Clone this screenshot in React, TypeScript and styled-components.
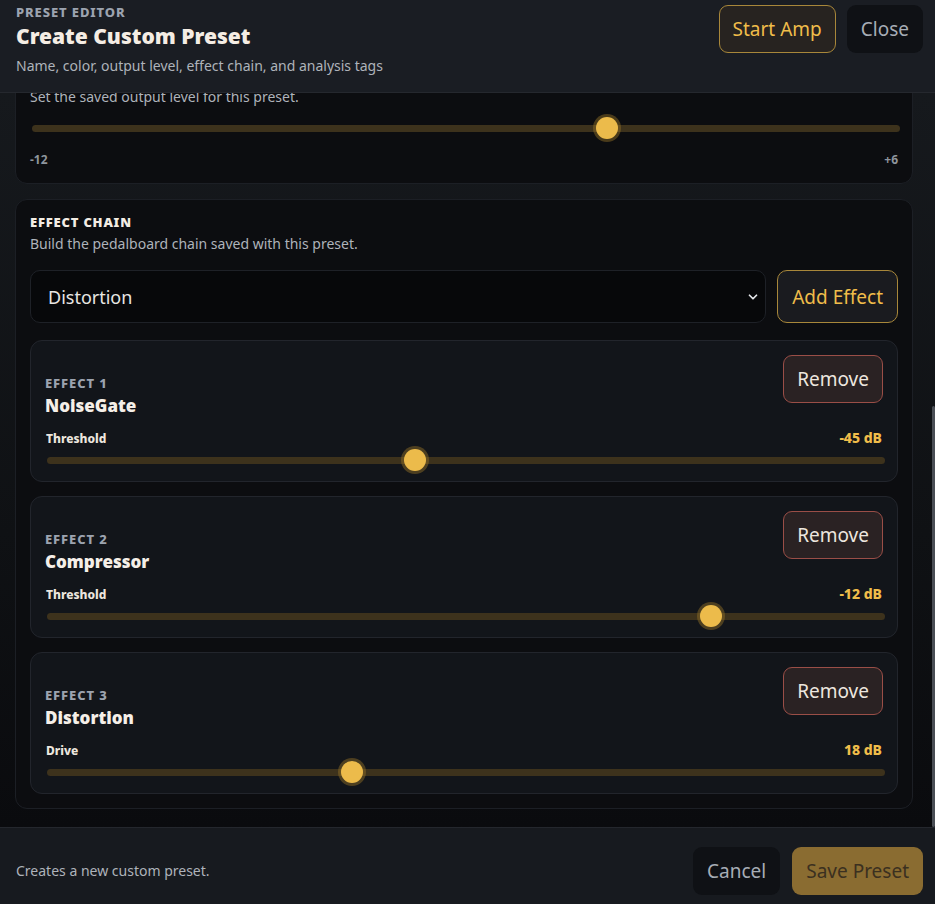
import { useLayoutEffect, useRef, useState } from 'react';
import styled, { createGlobalStyle } from 'styled-components';

type Effect = {
	id: number,
	name: string,
	param: string,
	unit: string,
	min: number,
	max: number,
	value: number,
}

const GlobalStyle = createGlobalStyle`
	html, body {
		margin: 0;
		height: 100%;
		background: #0b0c0f;
	}
	body {
		font-family: "Noto Sans", "Open Sans", sans-serif;
		color: #e5e7eb;
	}
	#root {
		height: 100%;
	}
	* {
		box-sizing: border-box;
	}
`

const Shell = styled.div`
	height: 100vh;
	display: flex;
	flex-direction: column;
	overflow: hidden;
`

const Header = styled.header`
	flex: 0 0 93px;
	display: flex;
	justify-content: space-between;
	align-items: flex-start;
	padding: 4px 12px 0 16px;
	background: #1a1d23;
	border-bottom: 1px solid #25282e;
`

const Eyebrow = styled.div`
	font-size: 13px;
	line-height: 16px;
	font-weight: 800;
	letter-spacing: 0.9px;
	text-transform: uppercase;
	color: #9ca3af;
`

const Title = styled.h1`
	margin: 2px 0 0;
	font-size: 21px;
	line-height: 28px;
	font-weight: 900;
	color: #f5ede4;
`

const Subtitle = styled.p`
	margin: 6px 0 0;
	font-size: 14px;
	line-height: 20px;
	color: #aeb3ba;
`

const Actions = styled.div`
	display: flex;
	gap: 11px;
	padding-top: 1px;
`

const Button = styled.button<{ $tone: 'gold' | 'ghost' | 'danger' | 'primary' }>`
	font-family: inherit;
	font-size: 19px;
	height: 48px;
	padding: 0 13px;
	border-radius: 9px;
	cursor: pointer;
	border: 1px solid ${p => p.$tone === 'gold' ? '#a8873a' : p.$tone === 'danger' ? '#9a4e47' : 'transparent'};
	background: ${p => p.$tone === 'gold' ? '#272320' : p.$tone === 'danger' ? '#2a2223' : p.$tone === 'primary' ? '#8a6c31' : '#0f1115'};
	color: ${p => p.$tone === 'gold' ? '#f0bd4a' : p.$tone === 'danger' ? '#ede6df' : p.$tone === 'primary' ? '#3b3020' : '#a7adb5'};
`

const BodyFrame = styled.div`
	flex: 1;
	min-height: 0;
	position: relative;
`

const Body = styled.main`
	height: 100%;
	overflow-y: auto;
	display: flex;
	flex-direction: column;
	gap: 15px;
	padding: 16px 22px 18px 15px;
	background: linear-gradient(180deg, #16191d 0%, #0f1114 60%, #0a0b0e 100%);
	scrollbar-width: none;
	&::-webkit-scrollbar {
		display: none;
	}
`

const ScrollThumb = styled.div`
	position: absolute;
	right: 0;
	width: 3px;
	border-radius: 2px;
	background: #4a4e55;
	pointer-events: none;
`

const Card = styled.section<{ $tight?: boolean }>`
	background: #0c0d10;
	border: 1px solid #1c1f25;
	border-radius: 12px;
	padding: 14px 14px ${p => p.$tight ? 14 : 15}px 14px;
`

const CardTitle = styled.h2`
	margin: 0;
	font-size: 13px;
	line-height: 16px;
	font-weight: 900;
	letter-spacing: 0.8px;
	text-transform: uppercase;
	color: #f3ece4;
`

const CardHint = styled.p`
	margin: 4px 0 0;
	font-size: 14px;
	line-height: 20px;
	color: #aeb3ba;
`

const Field = styled.input`
	width: 100%;
	margin-top: 12px;
	height: 48px;
	padding: 0 16px;
	border-radius: 10px;
	border: 1px solid #1e2127;
	background: #07080a;
	color: #e5e7eb;
	font-family: inherit;
	font-size: 18px;
`

const Notes = styled.textarea`
	display: block;
	width: 100%;
	height: 72px;
	margin-top: 10px;
	padding: 12px 16px;
	resize: none;
	border-radius: 10px;
	border: 1px solid #1e2127;
	background: #07080a;
	color: #aeb3ba;
	font-family: inherit;
	font-size: 15px;
`

const Swatches = styled.div`
	display: flex;
	gap: 10px;
	margin-top: 12px;
`

const Swatch = styled.span<{ $color: string }>`
	width: 34px;
	height: 34px;
	border-radius: 50%;
	background: ${p => p.$color};
`

const Tags = styled.div`
	display: flex;
	flex-wrap: wrap;
	gap: 8px;
	margin-top: 12px;
`

const Tag = styled.span<{ $on?: boolean }>`
	padding: 6px 12px;
	border-radius: 999px;
	font-size: 13px;
	border: 1px solid ${p => p.$on ? '#a8873a' : '#262a31'};
	color: ${p => p.$on ? '#f0bd4a' : '#aeb3ba'};
	background: ${p => p.$on ? '#272320' : '#12151a'};
`

const Slider = styled.input`
	-webkit-appearance: none;
	appearance: none;
	display: block;
	width: 100%;
	height: 22px;
	margin: 0 0 0 2px;
	background: transparent;
	&::-webkit-slider-runnable-track {
		height: 7px;
		border-radius: 4px;
		background: #3d321c;
	}
	&::-webkit-slider-thumb {
		-webkit-appearance: none;
		width: 22px;
		height: 22px;
		margin-top: -7.5px;
		border-radius: 50%;
		background: #ecbb4b;
		box-shadow: 0 0 0 3px rgba(150, 115, 40, 0.45);
	}
`

const OutputSlider = styled.div`
	margin-top: 10px;
`

const Scale = styled.div`
	display: flex;
	justify-content: space-between;
	margin-top: 13px;
	font-size: 12px;
	line-height: 16px;
	font-weight: 700;
	color: #8f959d;
`

const AddRow = styled.div`
	display: flex;
	gap: 11px;
	margin-top: 16px;
`

const SelectWrap = styled.div`
	flex: 1;
	position: relative;
	svg {
		position: absolute;
		right: 6px;
		top: 50%;
		transform: translateY(-50%);
		pointer-events: none;
	}
`

const Select = styled.select`
	-webkit-appearance: none;
	appearance: none;
	width: 100%;
	height: 53px;
	padding: 0 17px;
	border-radius: 10px;
	border: 1px solid #1e2127;
	background: #07080a;
	color: #e8e6e3;
	font-family: inherit;
	font-size: 18px;
`

const AddButton = styled(Button)`
	height: 53px;
	padding: 0 14px;
	border-radius: 10px;
	background: #1a1b1f;
`

const EffectList = styled.div`
	display: flex;
	flex-direction: column;
	gap: 14px;
	margin-top: 17px;
`

const EffectCard = styled.article`
	background: #12151a;
	border: 1px solid #22252c;
	border-radius: 12px;
	padding: 14px 14px 10px 14px;
`

const EffectHead = styled.div`
	display: flex;
	justify-content: space-between;
	align-items: flex-start;
`

const EffectInfo = styled.div`
	padding-top: 20px;
`

const EffectIndex = styled.div`
	font-size: 13px;
	line-height: 16px;
	font-weight: 800;
	letter-spacing: 0.9px;
	text-transform: uppercase;
	color: #9ca3af;
`

const EffectName = styled.div`
	margin-top: 4px;
	font-size: 17px;
	line-height: 22px;
	font-weight: 900;
	color: #f5efe8;
`

const ParamRow = styled.div`
	display: flex;
	justify-content: space-between;
	align-items: baseline;
	margin-top: 11px;
	padding: 0 1px;
`

const ParamName = styled.span`
	font-size: 12px;
	font-weight: 800;
	color: #ece6df;
`

const ParamValue = styled.span`
	font-size: 14px;
	font-weight: 800;
	color: #f0bd4a;
`

const EffectSlider = styled.div`
	margin-top: 2px;
`

const Footer = styled.footer`
	flex: 0 0 77px;
	display: flex;
	justify-content: space-between;
	align-items: center;
	padding: 0 12px 0 16px;
	background: #171a1f;
	border-top: 1px solid #24272d;
`

const FooterNote = styled.span`
	font-size: 14px;
	color: #aeb3ba;
	padding-top: 8px;
`

const FooterActions = styled.div`
	display: flex;
	gap: 12px;
	padding-top: 10px;
`

const initialEffects: Effect[] = [
	{ id: 1, name: 'NoiseGate', param: 'Threshold', unit: 'dB', min: -80, max: 0, value: -45 },
	{ id: 2, name: 'Compressor', param: 'Threshold', unit: 'dB', min: -60, max: 0, value: -12 },
	{ id: 3, name: 'Distortion', param: 'Drive', unit: 'dB', min: 0, max: 50, value: 18 },
]

const tags = ['Clean', 'Crunch', 'High Gain', 'Lead', 'Rhythm', 'Ambient', 'Bright', 'Warm', 'Tight Low End', 'Scooped Mids']

function Chevron() {
	return (
		<svg width="14" height="14" viewBox="0 0 24 24" fill="none" stroke="#e5e7eb" strokeWidth="3" strokeLinecap="round" strokeLinejoin="round">
			<path d="M6 9l6 6 6-6" />
		</svg>
	)
}

export default function App() {
	const bodyRef = useRef<HTMLElement>(null);
	const [level, setLevel] = useState(0);
	const [effects, setEffects] = useState(initialEffects);
	const [choice, setChoice] = useState('Distortion');
	const [thumb, setThumb] = useState({ top: 0, height: 0 });

	function syncThumb() {
		const el = bodyRef.current;
		if (!el) return;
		const ratio = el.clientHeight / el.scrollHeight;
		setThumb({ top: el.scrollTop * ratio, height: el.clientHeight * ratio });
	}

	useLayoutEffect(() => {
		if (bodyRef.current) bodyRef.current.scrollTop = bodyRef.current.scrollHeight;
		syncThumb();
	}, []);

	function updateEffect(id: number, value: number) {
		setEffects(list => list.map(e => e.id === id ? { ...e, value } : e));
	}

	return (
		<Shell>
			<GlobalStyle />
			<Header>
				<div>
					<Eyebrow>Preset Editor</Eyebrow>
					<Title>Create Custom Preset</Title>
					<Subtitle>Name, color, output level, effect chain, and analysis tags</Subtitle>
				</div>
				<Actions>
					<Button $tone="gold">Start Amp</Button>
					<Button $tone="ghost">Close</Button>
				</Actions>
			</Header>

			<BodyFrame>
				<Body ref={bodyRef} onScroll={syncThumb}>
					<Card>
						<CardTitle>Preset Name</CardTitle>
						<CardHint>Give the preset a name you will recognise later.</CardHint>
						<Field defaultValue="My Custom Tone" />
						<Notes defaultValue="Notes about this tone" />
					</Card>
					<Card>
						<CardTitle>Color</CardTitle>
						<CardHint>Pick an accent color for the preset card.</CardHint>
						<Swatches>
							{['#f0bd4a', '#e0634f', '#4fa3e0', '#5fc28a', '#a77be0'].map(c => <Swatch key={c} $color={c} />)}
						</Swatches>
					</Card>
					<Card>
						<CardTitle>Analysis Tags</CardTitle>
						<CardHint>Tags used when comparing this preset with analysed tones.</CardHint>
						<Tags>
							{tags.map((t, i) => <Tag key={t} $on={i === 1 || i === 4}>{t}</Tag>)}
						</Tags>
					</Card>
					<Card>
						<CardTitle>Output Level</CardTitle>
						<CardHint>Set the saved output level for this preset.</CardHint>
						<OutputSlider>
							<Slider type="range" min={-12} max={6} step={1} value={level} onChange={e => setLevel(Number(e.target.value))} />
						</OutputSlider>
						<Scale><span>-12</span><span>+6</span></Scale>
					</Card>

					<Card $tight>
						<CardTitle>Effect Chain</CardTitle>
						<CardHint>Build the pedalboard chain saved with this preset.</CardHint>
						<AddRow>
							<SelectWrap>
								<Select value={choice} onChange={e => setChoice(e.target.value)}>
									<option>NoiseGate</option>
									<option>Compressor</option>
									<option>Distortion</option>
									<option>Delay</option>
									<option>Reverb</option>
								</Select>
								<Chevron />
							</SelectWrap>
							<AddButton $tone="gold">Add Effect</AddButton>
						</AddRow>

						<EffectList>
							{effects.map((fx, i) => (
								<EffectCard key={fx.id}>
									<EffectHead>
										<EffectInfo>
											<EffectIndex>Effect {i + 1}</EffectIndex>
											<EffectName>{fx.name}</EffectName>
										</EffectInfo>
										<Button $tone="danger" onClick={() => setEffects(list => list.filter(e => e.id !== fx.id))}>Remove</Button>
									</EffectHead>
									<ParamRow>
										<ParamName>{fx.param}</ParamName>
										<ParamValue>{fx.value} {fx.unit}</ParamValue>
									</ParamRow>
									<EffectSlider>
										<Slider type="range" min={fx.min} max={fx.max} value={fx.value} onChange={e => updateEffect(fx.id, Number(e.target.value))} />
									</EffectSlider>
								</EffectCard>
							))}
						</EffectList>
					</Card>
				</Body>
				<ScrollThumb style={{ top: thumb.top, height: thumb.height }} />
			</BodyFrame>

			<Footer>
				<FooterNote>Creates a new custom preset.</FooterNote>
				<FooterActions>
					<Button $tone="ghost">Cancel</Button>
					<Button $tone="primary">Save Preset</Button>
				</FooterActions>
			</Footer>
		</Shell>
	);
}
